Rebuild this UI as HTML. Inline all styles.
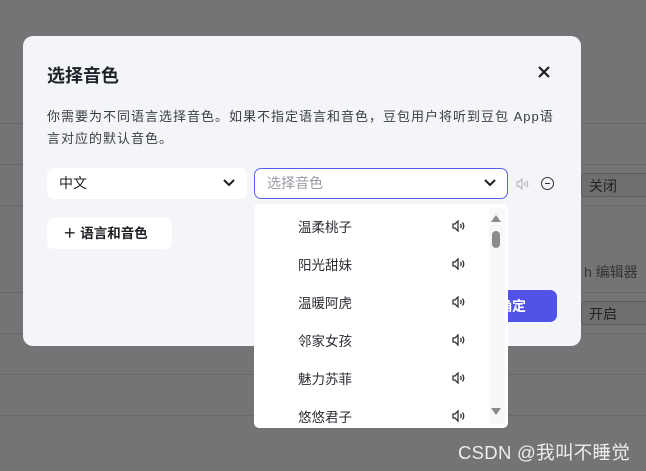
<!DOCTYPE html>
<html><head><meta charset="utf-8"><style>
*{margin:0;padding:0;box-sizing:border-box}
body{width:646px;height:471px;background:#747477;position:relative;overflow:hidden;font-family:"Liberation Sans","Noto Sans CJK SC",sans-serif;color:#1c1f23}
.ln{position:absolute;left:0;width:646px;height:1px;background:#68686b}
.modal{position:absolute;left:23px;top:36px;width:558px;height:310px;background:#f4f5f9;border-radius:10px}
.abs{position:absolute}
.sel{position:absolute;background:#fff;border-radius:7px;height:31px;font-size:14px;line-height:31px;padding-left:12px}
.bgtx{position:absolute;color:#222;font-size:14px}
.dd{position:absolute;left:254px;top:204px;width:254px;height:224px;background:#fff;border-radius:5px;overflow:hidden}
.it{position:absolute;left:44px;font-size:13.5px;color:#2b2d33}
.sp{position:absolute;left:198px;width:14px;height:12px}
</style></head><body>
<div class="ln" style="top:123px"></div><div class="ln" style="top:164px"></div><div class="ln" style="top:205px"></div><div class="ln" style="top:292px"></div><div class="ln" style="top:333px"></div><div class="ln" style="top:374px"></div><div class="ln" style="top:415px"></div>
<div class="abs" style="left:581px;top:173px;width:70px;height:24px;border:1px solid #5d5d60;border-radius:4px;background:#6f6f72"></div>
<div class="bgtx" style="left:589px;top:176px">关闭</div>
<div class="abs" style="left:581px;top:301px;width:70px;height:24px;border:1px solid #5d5d60;border-radius:4px;background:#6f6f72"></div>
<div class="bgtx" style="left:589px;top:304px">开启</div>
<div class="bgtx" style="left:584px;top:262px;color:#333">h 编辑器</div>
<div class="abs" style="left:498px;top:137px;width:13px;height:13px;border:1.3px solid #333;border-radius:50%;font-size:8px;line-height:10px;text-align:center;color:#333">A</div>
<div class="modal">
<div class="abs" style="left:24px;top:26px;font-size:18px;font-weight:bold;color:#1f2329">选择音色</div>
<svg class="abs" style="left:515px;top:30px" width="12" height="12"><path d="M1 1l10 10M11 1L1 11" stroke="#1c1f23" stroke-width="2.2"/></svg>
<div class="abs" style="left:24px;top:70px;width:540px;font-size:13px;line-height:22px;color:#3a3d44;letter-spacing:1px;white-space:nowrap">你需要为不同语言选择音色。如果不指定语言和音色，豆包用户将听到豆包 App语<br>言对应的默认音色。</div>
<div class="abs" style="left:24px;top:182px;width:125px;height:31px;background:#fff;border-radius:7px;font-size:13.5px;font-weight:bold;line-height:31px;padding-left:16px">＋ 语言和音色</div>
<div class="abs" style="left:460px;top:254px;width:74px;height:32px;background:#5052e8;border-radius:7px;color:#fff;font-weight:bold;font-size:14px;line-height:32px;padding-left:15px">确定</div>
</div>
<div class="sel" style="left:47px;top:168px;width:200px">中文
<svg class="abs" style="left:176px;top:10px" width="12" height="10"><path d="M1 2l5 5 5-5" stroke="#1c1f23" stroke-width="2" fill="none"/></svg></div>
<div class="sel" style="left:254px;top:168px;width:254px;border:1.5px solid #5a5ee6;color:#9a9ca3;line-height:28px">选择音色
<svg class="abs" style="left:229px;top:9px" width="12" height="10"><path d="M1 2l5 5 5-5" stroke="#1c1f23" stroke-width="2" fill="none"/></svg></div>
<svg class="abs" style="left:516px;top:178px" width="14" height="12" viewBox="0 0 14 12"><path d="M1 4h2l3-3v10L3 8H1z" fill="none" stroke="#bbb" stroke-width="1.3"/><path d="M8.5 4q1.3 2 0 4M10.5 2.5q2.5 3.5 0 7" fill="none" stroke="#bbb" stroke-width="1.3"/></svg>
<div class="abs" style="left:541px;top:177px;width:13px;height:13px;border:1.4px solid #333;border-radius:50%"><div class="abs" style="left:3px;top:4.5px;width:4.5px;height:1.4px;background:#333"></div></div>
<div class="dd">
<div class="it" style="top:12px">温柔桃子</div><div class="it" style="top:50px">阳光甜妹</div><div class="it" style="top:88px">温暖阿虎</div><div class="it" style="top:126px">邻家女孩</div><div class="it" style="top:164px">魅力苏菲</div><div class="it" style="top:202px">悠悠君子</div>
<svg class="sp" style="top:16px" viewBox="0 0 14 12"><path d="M1 4h2l3-3v10L3 8H1z" fill="none" stroke="#333" stroke-width="1.3"/><path d="M8.5 4q1.3 2 0 4M10.5 2.5q2.5 3.5 0 7" fill="none" stroke="#333" stroke-width="1.3"/></svg>
<svg class="sp" style="top:54px" viewBox="0 0 14 12"><path d="M1 4h2l3-3v10L3 8H1z" fill="none" stroke="#333" stroke-width="1.3"/><path d="M8.5 4q1.3 2 0 4M10.5 2.5q2.5 3.5 0 7" fill="none" stroke="#333" stroke-width="1.3"/></svg>
<svg class="sp" style="top:92px" viewBox="0 0 14 12"><path d="M1 4h2l3-3v10L3 8H1z" fill="none" stroke="#333" stroke-width="1.3"/><path d="M8.5 4q1.3 2 0 4M10.5 2.5q2.5 3.5 0 7" fill="none" stroke="#333" stroke-width="1.3"/></svg>
<svg class="sp" style="top:130px" viewBox="0 0 14 12"><path d="M1 4h2l3-3v10L3 8H1z" fill="none" stroke="#333" stroke-width="1.3"/><path d="M8.5 4q1.3 2 0 4M10.5 2.5q2.5 3.5 0 7" fill="none" stroke="#333" stroke-width="1.3"/></svg>
<svg class="sp" style="top:168px" viewBox="0 0 14 12"><path d="M1 4h2l3-3v10L3 8H1z" fill="none" stroke="#333" stroke-width="1.3"/><path d="M8.5 4q1.3 2 0 4M10.5 2.5q2.5 3.5 0 7" fill="none" stroke="#333" stroke-width="1.3"/></svg>
<svg class="sp" style="top:206px" viewBox="0 0 14 12"><path d="M1 4h2l3-3v10L3 8H1z" fill="none" stroke="#333" stroke-width="1.3"/><path d="M8.5 4q1.3 2 0 4M10.5 2.5q2.5 3.5 0 7" fill="none" stroke="#333" stroke-width="1.3"/></svg>
<div class="abs" style="left:235px;top:4px;width:16px;height:216px;background:#f8f8fa"></div>
<svg class="abs" style="left:237px;top:10px" width="10" height="8"><path d="M0 8L5 1l5 7z" fill="#8a8a8a"/></svg>
<div class="abs" style="left:238px;top:27px;width:8px;height:17px;background:#8c8c8c;border-radius:4px"></div>
<svg class="abs" style="left:237px;top:204px" width="10" height="8"><path d="M0 0l5 7 5-7z" fill="#8a8a8a"/></svg>
</div>
<div class="abs" style="left:458px;top:439px;font-size:18.5px;color:#eee;letter-spacing:0.3px">CSDN @我叫不睡觉</div>
</body></html>
